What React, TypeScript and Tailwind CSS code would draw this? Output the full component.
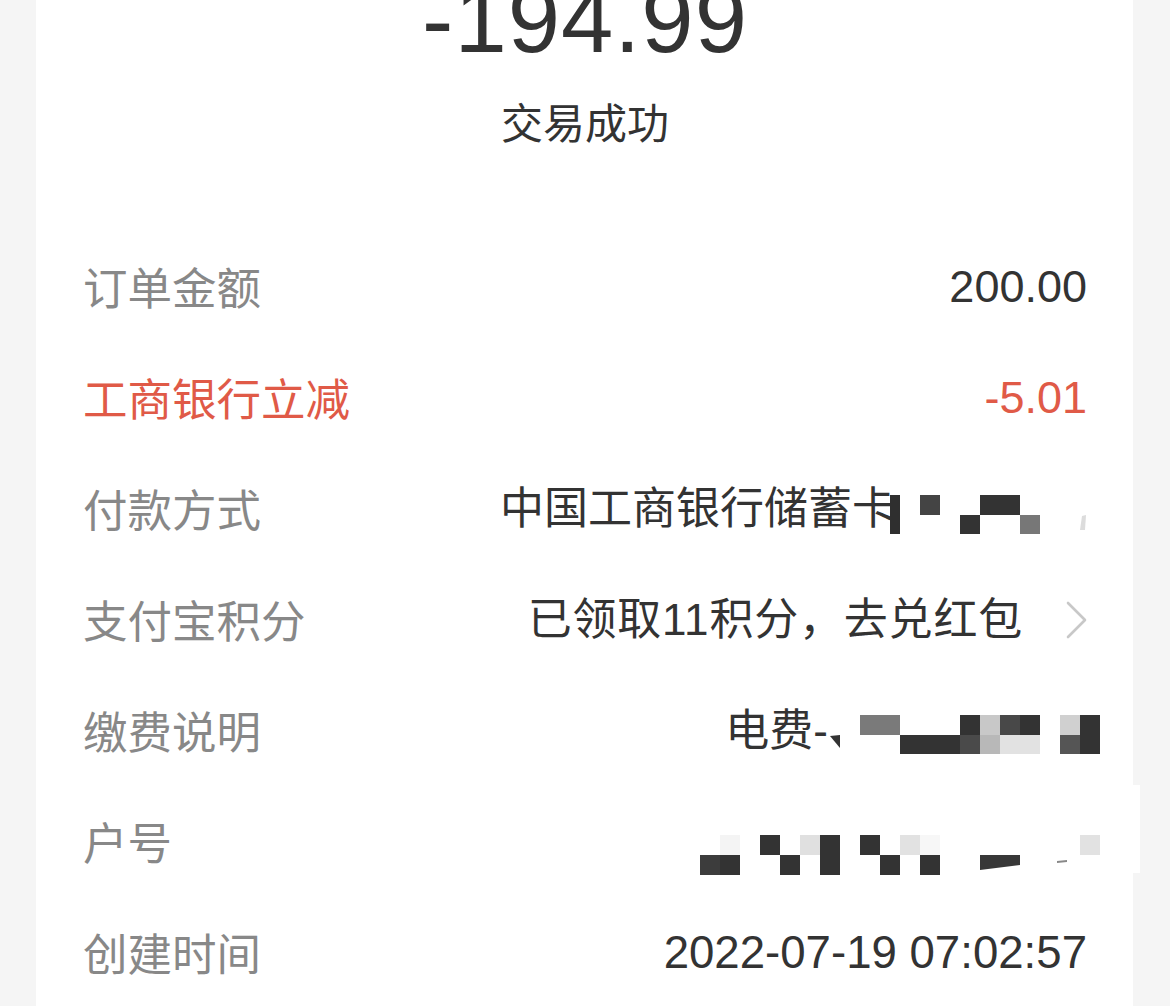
import type { ReactNode } from "react";

const sans = "font-['Liberation_Sans','Noto_Sans_CJK_SC',sans-serif]";
const cjk = "font-['Noto_Sans_CJK_SC','Liberation_Sans',sans-serif]";

// 打码块：付款方式
function CardMosaic() {
  return (
    <svg width="199" height="50" viewBox="0 0 199 50" className="ml-[-8px] shrink-0">
      <rect x="2" y="11" width="10" height="40" fill="#2f2f2f" />
      <rect x="32" y="11" width="20" height="20" fill="#444" />
      <rect x="92" y="11" width="40" height="20" fill="#333" />
      <rect x="72" y="31" width="20" height="20" fill="#333" />
      <rect x="132" y="31" width="20" height="20" fill="#777" />
      <polygon points="194,32 198,31 197,46 192,46" fill="#dcdcdc" />
    </svg>
  );
}

// 打码块：缴费说明
function NoteMosaic() {
  return (
    <svg width="272" height="46" viewBox="0 0 272 46" className="mr-[-13px] shrink-0">
      <polygon points="2,28 12,27 12,40" fill="#333" />
      <rect x="32" y="7" width="40" height="20" fill="#7a7a7a" />
      <rect x="72" y="27" width="60" height="20" fill="#333" />
      <rect x="132" y="7" width="20" height="20" fill="#333" />
      <rect x="132" y="27" width="20" height="20" fill="#4a4a4a" />
      <rect x="152" y="7" width="20" height="20" fill="#c8c8c8" />
      <rect x="152" y="27" width="20" height="20" fill="#b8b8b8" />
      <rect x="172" y="7" width="20" height="20" fill="#484848" />
      <rect x="192" y="7" width="20" height="20" fill="#333" />
      <rect x="172" y="27" width="40" height="20" fill="#e2e2e2" />
      <rect x="232" y="7" width="20" height="20" fill="#d0d0d0" />
      <rect x="232" y="27" width="20" height="20" fill="#555" />
      <rect x="252" y="7" width="20" height="40" fill="#333" />
    </svg>
  );
}

// 打码块：户号
function AccountMosaic() {
  return (
    <svg width="400" height="66" viewBox="0 0 400 66" className="mr-[-13px] shrink-0">
      <rect x="0" y="46" width="20" height="20" fill="#3c3c3c" />
      <rect x="20" y="46" width="20" height="20" fill="#333" />
      <rect x="20" y="26" width="20" height="20" fill="#f4f4f4" />
      <rect x="60" y="26" width="20" height="20" fill="#333" />
      <rect x="80" y="46" width="20" height="20" fill="#333" />
      <rect x="100" y="26" width="20" height="20" fill="#e0e0e0" />
      <rect x="120" y="26" width="20" height="40" fill="#333" />
      <rect x="160" y="26" width="20" height="20" fill="#333" />
      <rect x="180" y="46" width="20" height="20" fill="#333" />
      <rect x="200" y="26" width="20" height="20" fill="#e2e2e2" />
      <rect x="220" y="26" width="20" height="20" fill="#f7f7f7" />
      <rect x="220" y="46" width="20" height="20" fill="#333" />
      <polygon points="280,46 320,46 320,56 280,61" fill="#383838" />
      <polygon points="357,52 367,51 367,53 357,54" fill="#888" />
      <rect x="380" y="26" width="20" height="20" fill="#e2e2e2" />
    </svg>
  );
}

function Chevron() {
  return (
    <svg width="22" height="40" viewBox="0 0 22 40" className="ml-[42px] shrink-0">
      <polyline
        points="3,3 20,20 3,37"
        fill="none"
        stroke="#c8c8c8"
        strokeWidth="2.6"
        strokeLinecap="round"
        strokeLinejoin="round"
      />
    </svg>
  );
}

function Row({
  label,
  children,
  red = false,
}: {
  label: string;
  children: ReactNode;
  red?: boolean;
}) {
  return (
    <div className="flex h-[111px] items-center justify-between">
      <span
        className={`${cjk} text-[44.5px] leading-none ${red ? "text-[#e05a47]" : "text-[#888888]"}`}
      >
        {label}
      </span>
      <div className="flex items-center">{children}</div>
    </div>
  );
}

export default function App() {
  return (
    <div className="h-[1006px] overflow-hidden bg-[#f5f5f5]">
      <div className="relative ml-[36px] flow-root w-[1097px] bg-white pb-[40px] pl-[47px] pr-[46px]">
        <div
          className={`${sans} mt-[-27px] text-center text-[94px] leading-[94px] tracking-[1px] text-[#333333]`}
        >
          -194.99
        </div>
        <div className={`${cjk} mt-[24px] text-center text-[42px] leading-[60px] text-[#333333]`}>
          交易成功
        </div>

        <div className="mt-[80px]">
          <Row label="订单金额">
            <span className={`${sans} text-[45px] leading-none text-[#333333]`}>200.00</span>
          </Row>
          <Row label="工商银行立减" red>
            <span className={`${sans} text-[45px] leading-none text-[#e05a47]`}>-5.01</span>
          </Row>
          <Row label="付款方式">
            <span className={`${sans} text-[44px] leading-none text-[#333333]`}>
              中国工商银行储蓄卡
            </span>
            <CardMosaic />
          </Row>
          <Row label="支付宝积分">
            <span className={`${sans} text-[44px] leading-none tracking-[0.8px] text-[#333333]`}>
              已领取11积分，去兑红包
            </span>
            <Chevron />
          </Row>
          <Row label="缴费说明">
            <span className={`${sans} text-[44px] leading-none text-[#333333]`}>电费-</span>
            <NoteMosaic />
          </Row>
          <Row label="户号">
            <AccountMosaic />
          </Row>
          <Row label="创建时间">
            <span className={`${sans} text-[45.6px] leading-none text-[#333333]`}>
              2022-07-19 07:02:57
            </span>
          </Row>
        </div>

        {/* 截图边缘多出来的白块 */}
        <div className="absolute right-[-7px] top-[785px] h-[88px] w-[7px] bg-white" />
      </div>
    </div>
  );
}
